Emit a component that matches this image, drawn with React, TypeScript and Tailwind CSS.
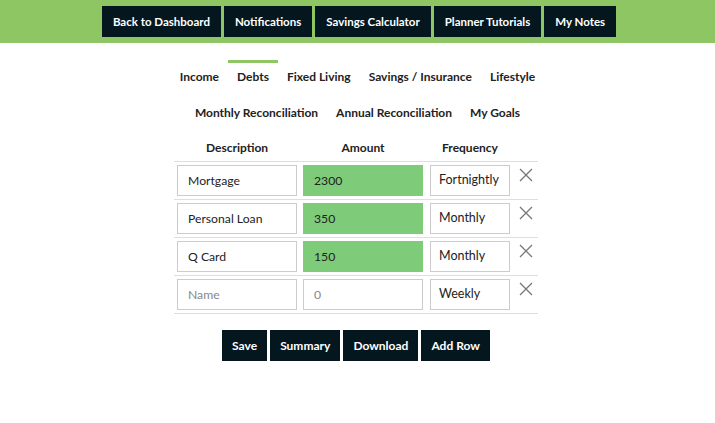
import { useState } from "react";

const topLinks = ["Back to Dashboard", "Notifications", "Savings Calculator", "Planner Tutorials", "My Notes"];
const tabsRowOne = ["Income", "Debts", "Fixed Living", "Savings / Insurance", "Lifestyle"];
const tabsRowTwo = ["Monthly Reconciliation", "Annual Reconciliation", "My Goals"];

type Row = { description: string; amount: string; frequency: string };

const initialRows: Row[] = [
  { description: "Mortgage", amount: "2300", frequency: "Fortnightly" },
  { description: "Personal Loan", amount: "350", frequency: "Monthly" },
  { description: "Q Card", amount: "150", frequency: "Monthly" },
  { description: "", amount: "", frequency: "Weekly" },
];

function Tab({ label, active }: { label: string; active?: boolean }) {
  return (
    <button
      className={`border-t-[3px] px-[9px] pt-[5px] pb-[2px] text-[12px] leading-[18px] font-bold text-[#222] ${
        active ? "border-[#8dc663]" : "border-transparent"
      }`}
    >
      {label}
    </button>
  );
}

function CloseIcon() {
  return (
    <svg width="14" height="14" viewBox="0 0 14 14" className="text-[#777]">
      <path d="M1 1 L13 13 M13 1 L1 13" stroke="currentColor" strokeWidth="1.3" fill="none" />
    </svg>
  );
}

export default function App() {
  const [rows, setRows] = useState<Row[]>(initialRows);

  return (
    <div className="min-h-[423px] bg-white font-['Lato','Noto_Sans',sans-serif] text-[#222]">
      <header className="flex justify-center gap-[3px] bg-[#8dc663] py-[6px] pl-[3px]">
        {topLinks.map((link) => (
          <a
            key={link}
            href="#"
            className="flex h-[31px] items-center bg-[#04171f] px-[11px] text-[11.5px] font-bold text-white"
          >
            {link}
          </a>
        ))}
      </header>

      <nav className="mt-[17px] flex flex-col items-center gap-[8px]">
        <div className="flex">
          {tabsRowOne.map((tab) => (
            <Tab key={tab} label={tab} active={tab === "Debts"} />
          ))}
        </div>
        <div className="flex">
          {tabsRowTwo.map((tab) => (
            <Tab key={tab} label={tab} />
          ))}
        </div>
      </nav>

      <div className="mt-[15px] flex justify-center pr-[3px]">
        <div className="w-[364px]">
          <div className="flex pl-[3px] pb-[4px] text-[12px] leading-[18px] font-bold">
            <div className="w-[120px] text-center">Description</div>
            <div className="ml-[6px] w-[120px] text-center">Amount</div>
            <div className="ml-[7px] w-[80px] text-center">Frequency</div>
          </div>

          {rows.map((row, i) => (
            <div key={i} className="flex border-t border-[#dedede] pt-[3px] pb-[3px] pl-[3px]">
              <input
                className="h-[31px] w-[120px] border border-[#cccccc] px-[10px] text-[12.2px] text-[#222] outline-none placeholder:text-[#888]"
                value={row.description}
                placeholder="Name"
                onChange={(e) =>
                  setRows(rows.map((r, j) => (j === i ? { ...r, description: e.target.value } : r)))
                }
              />
              <input
                className={`ml-[6px] h-[31px] w-[120px] border px-[10px] text-[12.2px] text-[#222] outline-none placeholder:text-[#888] ${
                  row.amount ? "border-[#7ecb79] bg-[#7ecb79]" : "border-[#cccccc] bg-white"
                }`}
                value={row.amount}
                placeholder="0"
                onChange={(e) => setRows(rows.map((r, j) => (j === i ? { ...r, amount: e.target.value } : r)))}
              />
              <div className="ml-[7px] flex h-[31px] w-[80px] items-center border border-[#cccccc] px-[8px] text-[12.5px]">
                {row.frequency}
              </div>
              <button
                className="ml-[9px] self-start pt-[3px]"
                onClick={() => setRows(rows.filter((_, j) => j !== i))}
              >
                <CloseIcon />
              </button>
            </div>
          ))}
          <div className="border-t border-[#dedede]" />
        </div>
      </div>

      <div className="mt-[16px] flex justify-center gap-[3px] pr-[3px]">
        {["Save", "Summary", "Download", "Add Row"].map((label) => (
          <button
            key={label}
            className="flex h-[31px] items-center bg-[#04171f] px-[10px] text-[12px] font-bold text-white"
            onClick={() =>
              label === "Add Row" && setRows([...rows, { description: "", amount: "", frequency: "Weekly" }])
            }
          >
            {label}
          </button>
        ))}
      </div>
    </div>
  );
}
